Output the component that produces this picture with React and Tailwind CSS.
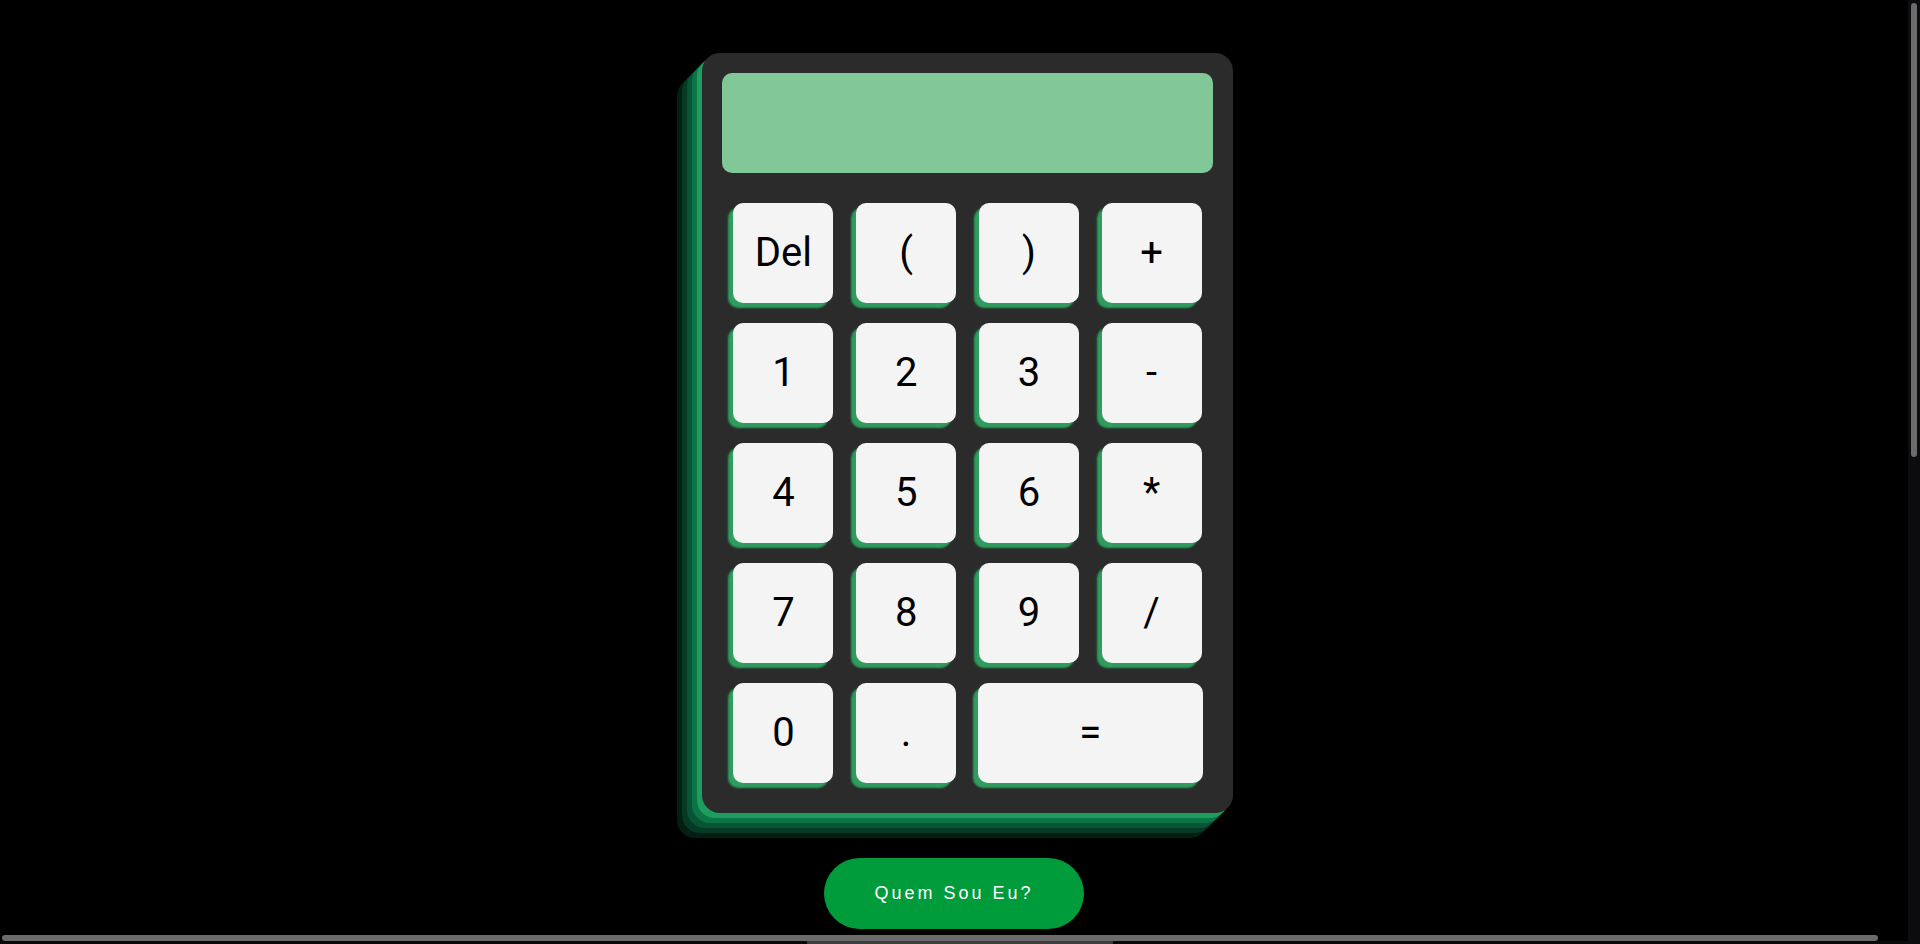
const keys = [
  "Del", "(", ")", "+",
  "1", "2", "3", "-",
  "4", "5", "6", "*",
  "7", "8", "9", "/",
  "0", ".", "=",
];

function Key({ label }) {
  const wide = label === "=";
  return (
    <button
      type="button"
      className={
        "flex h-[100px] items-center justify-center rounded-[10px] bg-[#f4f4f4] font-['Roboto',sans-serif] text-[40px] leading-none text-black shadow-[-5px_5px_2px_#2e9d5e] " +
        (wide ? "col-span-2 w-[225px]" : "w-[100px]")
      }
    >
      {label}
    </button>
  );
}

export default function App() {
  return (
    <div className="flex h-screen w-screen overflow-hidden bg-black">
      <div className="flex min-w-0 flex-1 flex-col">
        {/* page viewport */}
        <main className="min-h-0 flex-1 overflow-hidden">
          <div className="flex w-[1935px] justify-center pt-[53px]">
            <section className="w-[531px] rounded-[18px] bg-[#2b2b2b] p-5 shadow-[-5px_5px_0_#1c9f5e,-10px_10px_0_#0b7548,-15px_15px_0_#075535,-20px_20px_0_#053a25,-25px_25px_0_#031f14]">
              <div className="mb-5 h-[100px] w-full rounded-[10px] bg-[#81c798]" />
              <div className="grid grid-cols-4 justify-items-center gap-y-5 py-[10px]">
                {keys.map((k) => (
                  <Key key={k} label={k} />
                ))}
              </div>
            </section>
          </div>

          <div className="mt-[45px] flex justify-center">
            <button
              type="button"
              className="h-[71px] w-[260px] rounded-full bg-[#009b3a] font-['Liberation_Sans',Arial,sans-serif] text-[18px] tracking-[3px] text-white"
            >
              Quem Sou Eu?
            </button>
          </div>
        </main>

        {/* horizontal scrollbar */}
        <div aria-hidden="true" className="flex h-3 flex-col bg-black">
          <div className="h-[3px]" />
          <div className="ml-[2px] h-[6px] w-[1876px] rounded-full bg-[#6b6b6b]" />
          <div className="flex h-[3px] bg-[#0a0a0c]">
            <div className="ml-[807px] w-[306px] bg-[#3c3c3c]" />
          </div>
        </div>
      </div>

      {/* vertical scrollbar */}
      <div aria-hidden="true" className="w-3 bg-[#0c0c0e] px-[3px] pt-[3px]">
        <div className="h-[454px] w-[6px] rounded-full bg-[#6b6b6b]" />
      </div>
    </div>
  );
}
